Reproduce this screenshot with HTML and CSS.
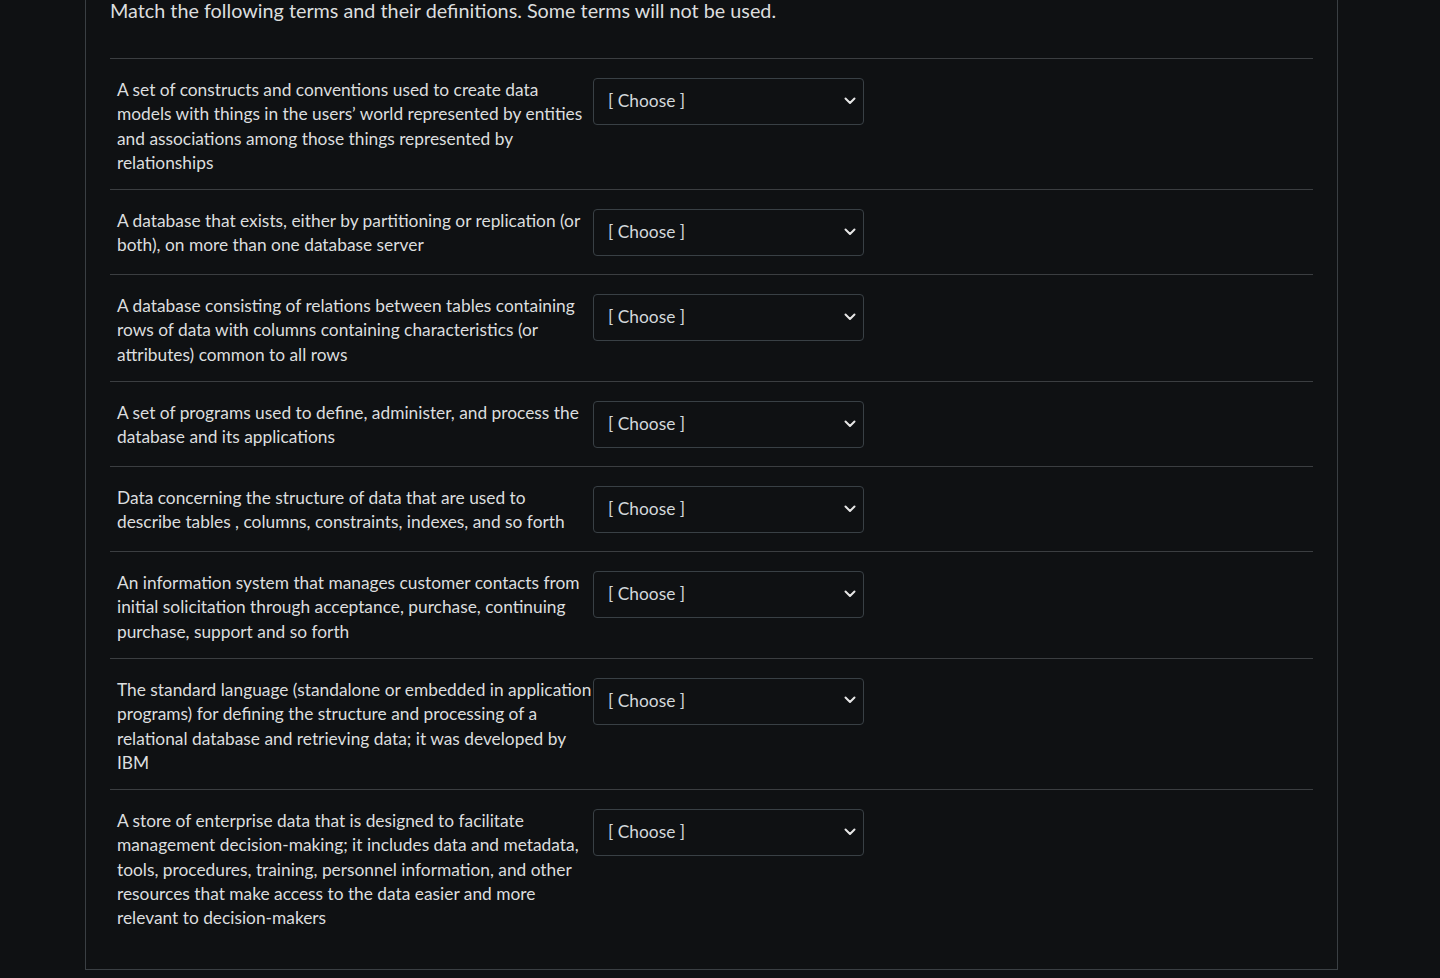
FILE: index.html
```html
<!DOCTYPE html>
<html lang="en">
<head>
<meta charset="utf-8">
<title>Matching question</title>
<link rel="stylesheet" href="styles.css">
</head>
<body>
<div class="question">
  <p class="prompt">Match the following terms and their definitions. Some terms will not be used.</p>
  <div class="answers">
    <div class="row">
      <div class="def">A set of constructs and conventions used to create data models with things in the users’ world represented by entities and associations among those things represented by relationships</div>
      <div class="select"><span>[ Choose ]</span><svg class="chev" width="12" height="8" viewBox="0 0 12 8"><path d="M1.5 1.5 L6 6 L10.5 1.5" fill="none" stroke="#e6e6e6" stroke-width="2" stroke-linecap="round" stroke-linejoin="round"/></svg></div>
    </div>
    <div class="row">
      <div class="def">A database that exists, either by partitioning or replication (or both), on more than one database server</div>
      <div class="select"><span>[ Choose ]</span><svg class="chev" width="12" height="8" viewBox="0 0 12 8"><path d="M1.5 1.5 L6 6 L10.5 1.5" fill="none" stroke="#e6e6e6" stroke-width="2" stroke-linecap="round" stroke-linejoin="round"/></svg></div>
    </div>
    <div class="row">
      <div class="def">A database consisting of relations between tables containing rows of data with columns containing characteristics (or attributes) common to all rows</div>
      <div class="select"><span>[ Choose ]</span><svg class="chev" width="12" height="8" viewBox="0 0 12 8"><path d="M1.5 1.5 L6 6 L10.5 1.5" fill="none" stroke="#e6e6e6" stroke-width="2" stroke-linecap="round" stroke-linejoin="round"/></svg></div>
    </div>
    <div class="row">
      <div class="def">A set of programs used to define, administer, and process the database and its applications</div>
      <div class="select"><span>[ Choose ]</span><svg class="chev" width="12" height="8" viewBox="0 0 12 8"><path d="M1.5 1.5 L6 6 L10.5 1.5" fill="none" stroke="#e6e6e6" stroke-width="2" stroke-linecap="round" stroke-linejoin="round"/></svg></div>
    </div>
    <div class="row">
      <div class="def">Data concerning the structure of data that are used to describe tables , columns, constraints, indexes, and so forth</div>
      <div class="select"><span>[ Choose ]</span><svg class="chev" width="12" height="8" viewBox="0 0 12 8"><path d="M1.5 1.5 L6 6 L10.5 1.5" fill="none" stroke="#e6e6e6" stroke-width="2" stroke-linecap="round" stroke-linejoin="round"/></svg></div>
    </div>
    <div class="row">
      <div class="def">An information system that manages customer contacts from initial solicitation through acceptance, purchase, continuing purchase, support and so forth</div>
      <div class="select"><span>[ Choose ]</span><svg class="chev" width="12" height="8" viewBox="0 0 12 8"><path d="M1.5 1.5 L6 6 L10.5 1.5" fill="none" stroke="#e6e6e6" stroke-width="2" stroke-linecap="round" stroke-linejoin="round"/></svg></div>
    </div>
    <div class="row">
      <div class="def">The standard language (standalone or embedded in application programs) for defining the structure and processing of a relational database and retrieving data; it was developed by IBM</div>
      <div class="select"><span>[ Choose ]</span><svg class="chev" width="12" height="8" viewBox="0 0 12 8"><path d="M1.5 1.5 L6 6 L10.5 1.5" fill="none" stroke="#e6e6e6" stroke-width="2" stroke-linecap="round" stroke-linejoin="round"/></svg></div>
    </div>
    <div class="row">
      <div class="def">A store of enterprise data that is designed to facilitate management decision-making; it includes data and metadata, tools, procedures, training, personnel information, and other resources that make access to the data easier and more relevant to decision-makers</div>
      <div class="select"><span>[ Choose ]</span><svg class="chev" width="12" height="8" viewBox="0 0 12 8"><path d="M1.5 1.5 L6 6 L10.5 1.5" fill="none" stroke="#e6e6e6" stroke-width="2" stroke-linecap="round" stroke-linejoin="round"/></svg></div>
    </div>
  </div>
</div>
</body>
</html>
```
FILE: styles.css
```css
html, body {
  margin: 0;
  padding: 0;
  background: #0f1113;
}
body {
  font-family: Lato, "Noto Sans", sans-serif;
  color: #dcdedf;
  height: 978px;
  overflow: hidden;
}
.question {
  box-sizing: border-box;
  margin-left: 85px;
  width: 1253px;
  border: 1px solid #3a3f43;
  border-top: none;
  padding: 0 24px 24px 24px;
}
.prompt {
  margin: 0;
  font-size: 19.8px;
  line-height: 21px;
  color: #dcdedf;
  padding-bottom: 37px;
}
.answers {
  display: flex;
  flex-direction: column;
}
.row {
  display: grid;
  grid-template-columns: 483px 271px;
  align-items: start;
  border-top: 1px solid #3b3e41;
  padding: 19px 0 14px 0;
}
.def {
  padding-left: 7px;
  font-size: 17.33px;
  line-height: 24.3px;
}
.select {
  box-sizing: border-box;
  height: 47px;
  margin-top: 0;
  margin-bottom: 4px;
  border: 1px solid #394045;
  border-radius: 4px;
  display: flex;
  align-items: center;
  justify-content: space-between;
  padding: 0 7px 2px 14px;
  font-size: 17.33px;
  color: #d3d8dc;
}
.chev {
  display: block;
}
```
